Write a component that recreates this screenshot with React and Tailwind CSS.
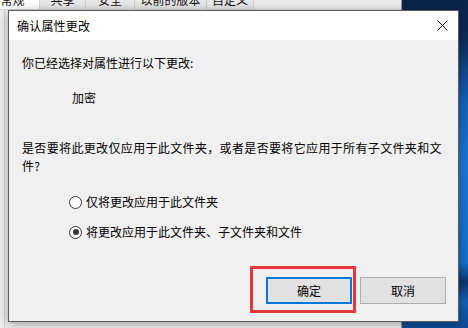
import React from 'react';

const FONT = { fontFamily: '"Noto Sans CJK SC", "Noto Sans", sans-serif' };

const TABS = [
  { label: '常规', w: 'w-[54px]', active: true },
  { label: '共享', w: 'w-[46px]' },
  { label: '安全', w: 'w-[49px]' },
  { label: '以前的版本', w: 'w-[72px]' },
  { label: '自定义', w: 'w-[47px]' },
];

function Radio({ checked, label }) {
  return (
    <div className="flex items-center h-4 ml-[47px] gap-[4px]">
      <span className="w-[13px] h-[13px] rounded-full border border-[#333] bg-white flex items-center justify-center">
        {checked && <span className="w-[6px] h-[6px] rounded-full bg-[#333]" />}
      </span>
      <span>{label}</span>
    </div>
  );
}

function PropertiesWindow() {
  // the folder properties window lying behind the dialog
  return (
    <div className="absolute left-[-14px] top-[-10px] w-[416px] h-[345px] bg-[#f0f0f0] border-r border-[#9a9a9a]">
      <div className="flex h-[20px] bg-[#ececec] border-b border-[#d9d9d9]">
        {TABS.map((t) => (
          <div
            key={t.label}
            className={`${t.w} h-full flex items-center justify-center border-r border-[#d0d0d0] text-[12px] text-[#111] ${
              t.active ? 'bg-white' : 'bg-gradient-to-b from-[#f2f2f2] to-[#e3e3e3]'
            }`}
          >
            {t.label}
          </div>
        ))}
      </div>
      <div className="absolute left-[18px] top-[20px] bottom-0 w-px bg-[#d5d5d5]" />
    </div>
  );
}

function ConfirmDialog() {
  return (
    <div className="absolute left-[8px] top-[10px] w-[451px] h-[312px] flex flex-col bg-[#f0f0f0] border border-[#5c5c5c] shadow-[0_2px_10px_rgba(0,0,0,0.35)] text-[12px] text-black">
      <div className="h-[29px] bg-white flex items-center justify-between pl-2 pr-[9px] shrink-0">
        <span className="tracking-[0.2px]">确认属性更改</span>
        <svg width="11" height="11" viewBox="0 0 11 11" className="mr-[1px]">
          <path d="M0.5 0.5 L10.5 10.5 M10.5 0.5 L0.5 10.5" stroke="#111" strokeWidth="1" fill="none" />
        </svg>
      </div>

      <div className="flex flex-col pl-[13px] pr-2 pt-[15px] leading-4">
        <p>你已经选择对属性进行以下更改:</p>
        <p className="mt-[19px] pl-[50px]">加密</p>
        <p className="mt-[33px] leading-[18px] tracking-[0.35px] whitespace-nowrap">
          是否要将此更改仅应用于此文件夹，或者是否要将它应用于所有子文件夹和文
          <br />
          件?
        </p>
        <div className="mt-[19px] flex flex-col gap-[14px]">
          <Radio label="仅将更改应用于此文件夹" />
          <Radio checked label="将更改应用于此文件夹、子文件夹和文件" />
        </div>

        <div className="mt-[37px] flex justify-end gap-2 pr-1">
          <div className="relative">
            <button className="w-[86px] h-[27px] bg-[#e1e1e1] border-2 border-[#0078d7] flex items-center justify-center">
              确定
            </button>
            <div className="absolute left-[-16px] right-[-4px] top-[-11px] bottom-[-9px] border-[3px] border-[#e5383d]" />
          </div>
          <button className="w-[86px] h-[27px] bg-[#e1e1e1] border border-[#adadad] flex items-center justify-center">
            取消
          </button>
        </div>
      </div>
    </div>
  );
}

export default function App() {
  return (
    <div
      className="relative w-[468px] h-[328px] overflow-hidden bg-[linear-gradient(to_bottom,#0b2447_0%,#0c2c5a_12%,#1560b8_30%,#1b78d8_50%,#1670cc_80%,#0a3670_86%,#1462b8_92%,#0e4a94_100%)]"
      style={FONT}
    >
      <PropertiesWindow />
      <ConfirmDialog />
    </div>
  );
}
